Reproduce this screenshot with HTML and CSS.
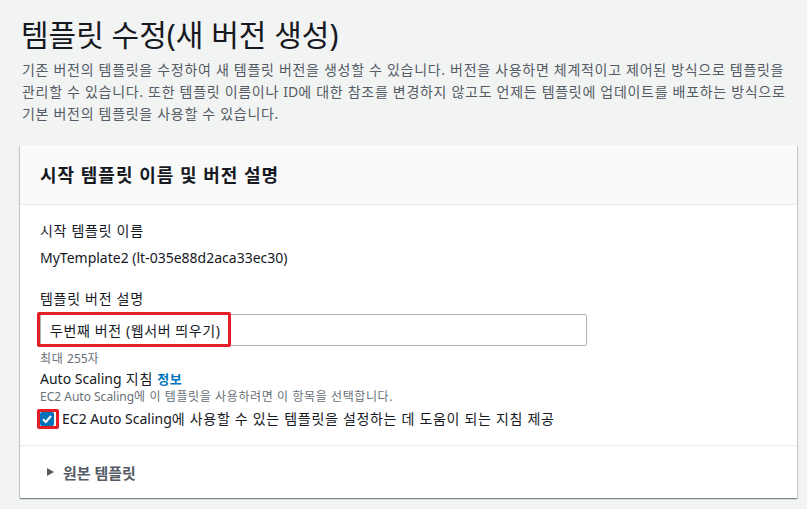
FILE: index.html
```html
<!DOCTYPE html>
<html lang="ko">
<head>
<meta charset="utf-8">
<link rel="stylesheet" href="styles.css">
</head>
<body>
<div class="page">
  <h1 class="title">템플릿 수정(새 버전 생성)</h1>
  <p class="desc">기존 버전의 템플릿을 수정하여 새 템플릿 버전을 생성할 수 있습니다. 버전을 사용하면 체계적이고 제어된 방식으로 템플릿을<br>관리할 수 있습니다. 또한 템플릿 이름이나 <span class="en">ID</span>에 대한 참조를 변경하지 않고도 언제든 템플릿에 업데이트를 배포하는 방식으로<br>기본 버전의 템플릿을 사용할 수 있습니다.</p>

  <section class="card">
    <div class="card-header">
      <h2 class="card-title">시작 템플릿 이름 및 버전 설명</h2>
    </div>
    <div class="card-body">
      <div class="field">
        <div class="label">시작 템플릿 이름</div>
        <div class="value">MyTemplate2 (lt-035e88d2aca33ec30)</div>
      </div>
      <div class="field field-desc">
        <div class="label">템플릿 버전 설명</div>
        <div class="input-wrap">
          <input class="input" type="text" value="두번째 버전 (웹서버 띄우기)">
          <span class="mark mark-input"></span>
        </div>
        <div class="hint">최대 <span class="en">255</span>자</div>
      </div>
      <div class="field field-as">
        <div class="as-label"><span class="en">Auto Scaling</span> 지침 <a class="info">정보</a></div>
        <div class="hint hint-as"><span class="en">EC2 Auto Scaling</span>에 이 템플릿을 사용하려면 이 항목을 선택합니다.</div>
        <label class="check-row">
          <span class="check-wrap">
            <span class="checkbox">
              <svg viewBox="0 0 14 14" width="14" height="14"><path d="M3 7.2 L5.8 10 L11 4" fill="none" stroke="#fff" stroke-width="2"/></svg>
            </span>
            <span class="mark mark-check"></span>
          </span>
          <span class="check-text"><span class="en">EC2 Auto Scaling</span>에 사용할 수 있는 템플릿을 설정하는 데 도움이 되는 지침 제공</span>
        </label>
      </div>
    </div>
    <div class="card-footer">
      <span class="caret"></span>
      <span class="expand-title">원본 템플릿</span>
    </div>
  </section>
</div>
</body>
</html>
```

FILE: styles.css
```css
* { box-sizing: border-box; }
html, body { margin: 0; padding: 0; }
body {
  background: #f2f3f3;
  font-family: "Noto Sans", "Noto Sans CJK KR", sans-serif;
  color: #16191f;
  width: 807px;
  height: 509px;
  overflow: hidden;
}
.en { letter-spacing: 0; }
.page {
  padding: 14px 10px 0 20px;
}
.title {
  margin: 0 0 0 1px;
  font-size: 30px;
  font-weight: 400;
  line-height: 42px;
  color: #16191f;
}
.desc {
  margin: 3px 0 0 2px;
  font-size: 14px;
  line-height: 22px;
  color: #545b64;
  letter-spacing: 0.7px;
}
.card {
  margin-top: 20px;
  width: 777px;
  background: #fff;
  box-shadow: 0 1px 1px 0 rgba(0,28,36,.3), 1px 1px 1px 0 rgba(0,28,36,.15), -1px 1px 1px 0 rgba(0,28,36,.15);
}
.card-header {
  height: 60px;
  background: #fafafa;
  border-bottom: 1px solid #eaeded;
  display: flex;
  align-items: center;
  padding: 0 20px;
}
.card-title {
  margin: 0;
  font-size: 18px;
  font-weight: 700;
  line-height: 24px;
  letter-spacing: 1px;
}
.card-body {
  padding: 15px 20px 15px;
  border-bottom: 1px solid #eaeded;
}
.label {
  font-size: 14px;
  line-height: 22px;
  letter-spacing: 0.7px;
}
.value {
  font-size: 14px;
  line-height: 22px;
  margin-top: 5px;
}
.field-desc { margin-top: 19px; }
.input-wrap {
  position: relative;
  width: 547px;
  margin-top: 4px;
}
.input {
  display: block;
  width: 547px;
  height: 32px;
  border: 1px solid #aab7b8;
  border-radius: 2px;
  padding: 0 9px;
  font-family: inherit;
  font-size: 14px;
  letter-spacing: 0.6px;
  color: #16191f;
  background: #fff;
  outline: none;
}
.mark {
  position: absolute;
  border: 3px solid #e41e26;
  border-radius: 2px;
  pointer-events: none;
}
.mark-input {
  left: -3px;
  top: -2px;
  width: 194px;
  height: 35px;
}
.hint {
  font-size: 12px;
  line-height: 18px;
  color: #687078;
  margin-top: 4px;
  letter-spacing: 0.6px;
}
.as-label {
  font-size: 14px;
  line-height: 22px;
  letter-spacing: 0.7px;
}
.info {
  color: #0073bb;
  font-size: 13px;
  font-weight: 700;
  letter-spacing: 0.5px;
  text-decoration: none;
}
.hint-as { margin-top: -2px; }
.check-row {
  display: flex;
  align-items: center;
  margin-top: 2px;
}
.check-wrap {
  position: relative;
  width: 14px;
  height: 14px;
  margin-right: 8px;
}
.checkbox {
  display: block;
  width: 14px;
  height: 14px;
  background: #0073bb;
  border-radius: 2px;
}
.checkbox svg { display: block; }
.mark-check {
  left: -3px;
  top: -3px;
  width: 22px;
  height: 20px;
}
.check-text {
  font-size: 14px;
  line-height: 22px;
  letter-spacing: 0.7px;
}
.card-footer {
  height: 52px;
  display: flex;
  align-items: center;
  padding: 0 20px 0 27px;
}
.caret {
  width: 0;
  height: 0;
  border-left: 7px solid #545b64;
  border-top: 4.5px solid transparent;
  border-bottom: 4.5px solid transparent;
  margin-right: 9px;
}
.expand-title {
  font-size: 15px;
  font-weight: 700;
  color: #545b64;
}
```
